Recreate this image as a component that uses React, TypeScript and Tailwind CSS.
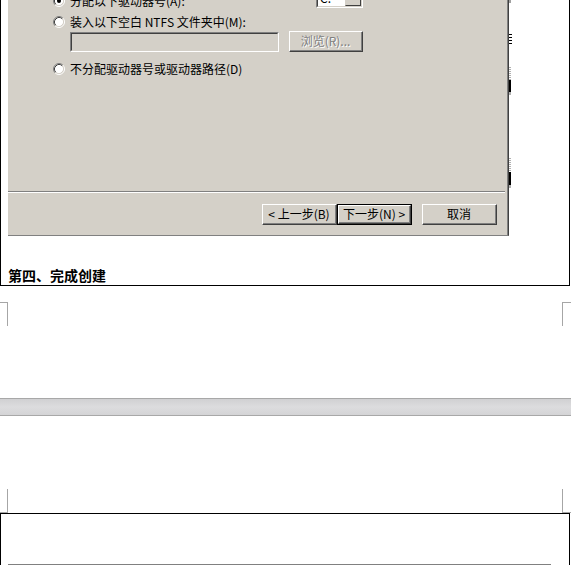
import React from "react";

const FONT = { fontFamily: '"Noto Sans CJK SC", "Noto Sans", sans-serif' };

function Radio({ checked = false }: { checked?: boolean }) {
  return (
    <svg width="12" height="12" viewBox="0 0 12 12" className="shrink-0">
      <circle cx="6" cy="6" r="4.5" fill="#ffffff" />
      <path d="M9.89 2.11 A5.5 5.5 0 0 0 2.11 9.89" fill="none" stroke="#808080" strokeWidth="1" />
      <path d="M9.18 2.82 A4.5 4.5 0 0 0 2.82 9.18" fill="none" stroke="#404040" strokeWidth="1" />
      <path d="M9.89 2.11 A5.5 5.5 0 0 1 2.11 9.89" fill="none" stroke="#ffffff" strokeWidth="1" />
      <path d="M9.18 2.82 A4.5 4.5 0 0 1 2.82 9.18" fill="none" stroke="#d4d0c8" strokeWidth="1" />
      {checked && <circle cx="6" cy="6" r="2" fill="#000000" />}
    </svg>
  );
}

function Raised({ children, className = "", disabled = false }: { children: React.ReactNode; className?: string; disabled?: boolean }) {
  return (
    <div
      className={
        "box-border border border-t-white border-l-white border-r-[#404040] border-b-[#404040] bg-[#d4d0c8] " +
        className
      }
    >
      <div className="w-full h-full box-border border-r border-b border-r-[#808080] border-b-[#808080] flex items-center justify-center">
        <span
          className={
            disabled
              ? "text-[12px] leading-[12px] text-[#808080] [text-shadow:1px_1px_0_#ffffff]"
              : "text-[12px] leading-[12px] text-black"
          }
          style={FONT}
        >
          {children}
        </span>
      </div>
    </div>
  );
}

function Sunken({ className = "", children }: { className?: string; children?: React.ReactNode }) {
  return (
    <div className={"box-border border border-t-[#808080] border-l-[#808080] border-r-white border-b-white " + className}>
      <div className="w-full h-full box-border border border-t-[#404040] border-l-[#404040] border-r-[#d4d0c8] border-b-[#d4d0c8] flex">
        {children}
      </div>
    </div>
  );
}

function Dialog() {
  return (
    <div className="w-[501px] h-[236px] box-border border-r border-r-[#404040] border-b border-b-[#808080] bg-[#d4d0c8] overflow-hidden flex flex-col shadow-[inset_-1px_0_0_#808080]">
      <div className="h-[191px] shrink-0 flex flex-col">
        {/* row 1 (cut off) */}
        <div className="flex items-start h-[12px] mt-[-5px]">
          <div className="w-[308px] flex items-center pl-[45px] gap-[5px] h-[12px]">
            <Radio checked />
            <span className="text-[12px] leading-[12px] text-black whitespace-nowrap" style={FONT}>
              分配以下驱动器号(A):
            </span>
          </div>
          <div className="mt-[-7px] w-[47px] h-[20px] box-border border border-t-[#808080] border-l-[#808080] border-r-white border-b-white">
            <div className="w-full h-full box-border border border-t-[#404040] border-l-[#404040] border-r-[#d4d0c8] border-b-[#d4d0c8] flex bg-white">
              <span className="flex-1 text-[12px] leading-[12px] text-black pl-[2px] pt-[2px]" style={FONT}>C:</span>
              <div className="w-[16px] h-full box-border border border-t-[#d4d0c8] border-l-[#d4d0c8] border-r-[#404040] border-b-[#404040] bg-[#d4d0c8] flex items-center justify-center">
                <svg width="7" height="4" viewBox="0 0 7 4"><path d="M0 0h7L3.5 4z" fill="#000" /></svg>
              </div>
            </div>
          </div>
        </div>
        {/* row 2 */}
        <div className="flex items-center pl-[45px] gap-[5px] h-[12px] mt-[9px]">
          <Radio />
          <span className="text-[12px] leading-[12px] text-black whitespace-nowrap" style={FONT}>
            装入以下空白 NTFS 文件夹中(M):
          </span>
        </div>
        {/* input row */}
        <div className="flex items-end mt-[3px] pl-[62px]">
          <Sunken className="w-[209px] h-[20px] bg-[#d4d0c8]" />
          <Raised disabled className="ml-[10px] w-[74px] h-[21px]">
            浏览(R)...
          </Raised>
        </div>
        {/* row 3 */}
        <div className="flex items-center pl-[45px] gap-[5px] h-[12px] mt-[11px]">
          <Radio />
          <span className="text-[12px] leading-[12px] text-black whitespace-nowrap" style={FONT}>
            不分配驱动器号或驱动器路径(D)
          </span>
        </div>
      </div>
      {/* separator */}
      <div className="h-[2px] mr-[3px] box-border border-t border-t-[#808080] border-b border-b-white shrink-0" />
      {/* buttons */}
      <div className="flex justify-end pt-[11px] pr-[11px]">
        <Raised className="w-[75px] h-[21px]">&lt; 上一步(B)</Raised>
        <div className="w-[75px] h-[21px] box-border border border-black flex">
          <Raised className="w-full h-full">下一步(N) &gt;</Raised>
        </div>
        <Raised className="ml-[10px] w-[75px] h-[21px]">取消</Raised>
      </div>
    </div>
  );
}

function EdgeMarks() {
  return (
    <div className="absolute left-[509px] top-0 w-[3px] h-[200px]">
      <div className="absolute top-0 left-0 w-[2px] h-[3px] bg-[#a0a0a0]" />
      <div className="absolute top-[34px] left-0 w-[3px] h-px bg-black" />
      <div className="absolute top-[37px] left-0 w-[3px] h-px bg-black" />
      <div className="absolute top-[40px] left-0 w-[3px] h-px bg-black" />
      <div className="absolute top-[43px] left-0 w-[3px] h-px bg-black" />
      <div className="absolute top-[67px] left-0 w-[2px] h-[13px] bg-[repeating-linear-gradient(#b0b0b0_0_1px,transparent_1px_2px)]" />
      <div className="absolute top-[80px] left-0 w-[2px] h-[12px] bg-black" />
      <div className="absolute top-[92px] left-0 w-[2px] h-[3px] bg-[#b0b0b0]" />
      <div className="absolute top-[158px] left-0 w-[2px] h-[14px] bg-[repeating-linear-gradient(#b0b0b0_0_1px,transparent_1px_2px)]" />
      <div className="absolute top-[172px] left-0 w-[2px] h-[13px] bg-black" />
      <div className="absolute top-[185px] left-0 w-[2px] h-[3px] bg-[#b0b0b0]" />
    </div>
  );
}

export default function App() {
  return (
    <div className="w-[571px] h-[565px] overflow-hidden bg-white flex flex-col">
      {/* page 1 bottom */}
      <div className="relative h-[398px] shrink-0">
        <div className="w-[570px] h-[286px] box-border border-l border-r border-b border-black flex flex-col">
          <div className="pl-[7px]">
            <Dialog />
          </div>
          <div className="pl-[7px] mt-[31px] text-[14px] leading-[16px] font-bold text-black" style={FONT}>
            第四、完成创建
          </div>
        </div>
        <EdgeMarks />
        {/* margin corner marks */}
        <div className="absolute left-0 top-[302px] w-[8px] h-[24px] border-t border-r border-[#a6a6a6]" />
        <div className="absolute left-[562px] top-[302px] w-[9px] h-[24px] border-t border-l border-[#a6a6a6]" />
      </div>
      {/* gap between pages */}
      <div className="h-[18px] shrink-0 border-t border-b border-[#a8a8a8] bg-[linear-gradient(#d0d0d2,#dcdcde_50%,#d4d4d6)]" />
      {/* page 2 top */}
      <div className="relative flex-1">
        <div className="absolute left-0 top-[73px] w-[8px] h-[24px] border-b border-r border-[#a6a6a6]" />
        <div className="absolute left-[562px] top-[73px] w-[9px] h-[24px] border-b border-l border-[#a6a6a6]" />
        <div className="mt-[97px] w-[570px] h-[60px] box-border border-l border-r border-t border-black pl-[7px] pt-[50px]">
          <div className="w-[543px] h-px bg-[#808080]" />
        </div>
      </div>
    </div>
  );
}
